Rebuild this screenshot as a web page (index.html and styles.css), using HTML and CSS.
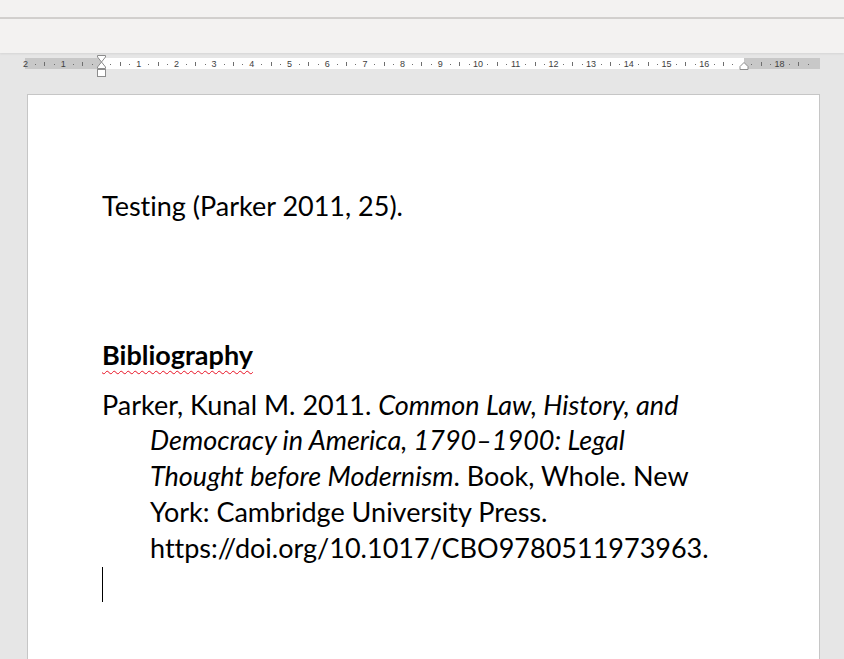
FILE: index.html
```html
<!DOCTYPE html>
<html lang="en">
<head>
    <meta charset="UTF-8">
    <meta name="viewport" content="width=device-width, initial-scale=1.0">
    <title>Document</title>
    <link rel="stylesheet" href="styles.css">
</head>
<body>
    <div class="titlebar"></div>
    <div class="toolbar"></div>

    <div class="workspace">
        <div class="ruler">
            <svg id="ruler" width="800" height="24" viewBox="0 0 800 24">
                <rect x="5" y="4" width="76" height="11" fill="#c8c8c8"/>
                <rect x="81" y="4" width="643" height="11" fill="#ffffff"/>
                <rect x="724" y="4" width="76" height="11" fill="#c8c8c8"/>
                <g id="ticks"></g>
                <path d="M77.5 1.5 H85.5 V3 L81.5 8 L77.5 3 Z" fill="#fff" stroke="#8c8c8c"/>
                <path d="M81.5 8 L85.5 13 V14.5 H77.5 V13 Z" fill="#fff" stroke="#8c8c8c"/>
                <rect x="77.5" y="15.5" width="8" height="7" fill="#fff" stroke="#8c8c8c"/>
                <path d="M724 8.5 L728 12.5 V15.5 H720 V12.5 Z" fill="#fff" stroke="#8c8c8c"/>
            </svg>
        </div>

        <div class="page">
            <p class="cite">Testing (Parker 2011, 25).</p>

            <h2 class="biblio-title"><span class="misspelt">Bibliography</span></h2>
            <p class="entry">Parker, Kunal M. 2011. <i>Common Law, History, and Democracy in America, 1790–1900: Legal Thought before Modernism</i>. Book, Whole. New York: Cambridge University Press. https://doi.org/10.1017/CBO9780511973963.</p>
            <p class="empty"><span class="caret"></span></p>
        </div>
    </div>

    <script>
        // ruler ticks: zero at x=81, 37.7px per cm
        var cm = 37.7;
        var zero = 81;
        var svgNs = "http://www.w3.org/2000/svg";
        var ticks = document.getElementById("ticks");

        function addRect(x, y, w, h) {
            var r = document.createElementNS(svgNs, "rect");
            r.setAttribute("x", x);
            r.setAttribute("y", y);
            r.setAttribute("width", w);
            r.setAttribute("height", h);
            r.setAttribute("fill", "#6e6e6e");
            ticks.appendChild(r);
        }

        for (var i = -2; i <= 18; i++) {
            var x = zero + i * cm;
            if (i != 0 && i != 17) {
                var t = document.createElementNS(svgNs, "text");
                t.setAttribute("x", x.toFixed(1));
                t.setAttribute("y", 12.5);
                t.setAttribute("class", "num");
                t.textContent = Math.abs(i);
                ticks.appendChild(t);
            }
            addRect(Math.round(x + cm * 0.25), 10, 1, 1);
            addRect(Math.round(x + cm * 0.5), 8, 1, 4);
            addRect(Math.round(x + cm * 0.75), 10, 1, 1);
        }
    </script>
</body>
</html>
```
FILE: styles.css
```css
body {
    margin: 0;
    background: #e6e6e6;
    font-family: 'Lato', sans-serif;
    overflow: hidden;
}
.titlebar {
    height: 17px;
    background: #f3f2f1;
    border-bottom: 2px solid #d2d0ce;
}
.toolbar {
    height: 34px;
    background: #f3f2f1;
    box-shadow: 0 1px 2px rgba(0, 0, 0, 0.08);
    position: relative;
}
.workspace {
    padding-top: 1px;
}
.ruler {
    margin-left: 20px;
    height: 24px;
}
.ruler svg {
    display: block;
}
.ruler .num {
    font-family: 'Liberation Sans', sans-serif;
    font-size: 9px;
    fill: #404040;
    text-anchor: middle;
}
.page {
    box-sizing: border-box;
    margin: 16px 0 0 27px;
    width: 793px;
    min-height: 565px;
    background: #fff;
    border: 1px solid #c6c6c6;
    border-bottom: none;
    padding: 93px 109px 0 74px;
    color: #000;
    font-size: 27px;
    line-height: 35.8px;
    font-variant-ligatures: none;
}
.page p,
.page h2 {
    margin: 0;
}
.cite {
    margin-bottom: 113px !important;
}
.biblio-title {
    font-size: 27px;
    font-weight: bold;
    margin-bottom: 14px !important;
}
.misspelt {
    text-decoration: underline wavy #e81123;
    text-decoration-thickness: 1px;
    text-underline-offset: 5px;
}
.entry {
    padding-left: 48px;
    text-indent: -48px;
}
.empty {
    height: 35.8px;
}
.caret {
    display: inline-block;
    width: 1px;
    height: 35px;
    background: #000;
    vertical-align: top;
    margin-top: 1px;
}
```
